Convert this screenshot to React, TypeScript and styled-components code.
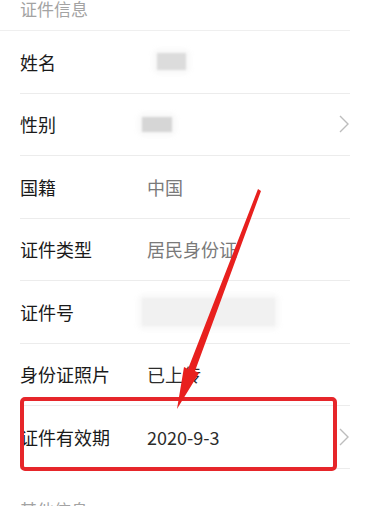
import styled, { createGlobalStyle } from "styled-components";

const GlobalStyle = createGlobalStyle`
  html, body {
    margin: 0;
    padding: 0;
    background: #ffffff;
    overflow: hidden;
  }
  body {
    font-family: "Noto Sans CJK SC", "Noto Sans", sans-serif;
  }
`;

const Page = styled.div`
  position: relative;
  width: 368px;
  height: 506px;
  overflow: hidden;
  background: #ffffff;
`;

const SectionTitle = styled.div<{ $gap?: number }>`
  height: 31px;
  margin-top: ${(p) => p.$gap ?? 0}px;
  padding-left: 20px;
  font-size: 17px;
  line-height: 17px;
  color: #a3a3a3;
  border-bottom: 1px solid #efefef;
  margin-right: 18px;
  box-sizing: border-box;
`;

const Row = styled.div`
  display: flex;
  align-items: center;
  height: 62.5px;
  box-sizing: border-box;
  margin: 0 18px 0 20px;
  border-bottom: 1px solid #ececec;
`;

const Label = styled.div`
  width: 127px;
  flex-shrink: 0;
  font-size: 18px;
  color: #1a1a1a;
`;

const Value = styled.div<{ $dark?: boolean }>`
  flex: 1;
  font-size: 18px;
  color: ${(p) => (p.$dark ? "#2c2c2c" : "#7a7a7a")};
`;

const Blur = styled.div<{ $w: number; $h: number; $shift: number; $tone: string }>`
  width: ${(p) => p.$w}px;
  height: ${(p) => p.$h}px;
  margin-left: ${(p) => p.$shift}px;
  background: ${(p) => p.$tone};
  box-shadow: 0 0 6px 3px #f6f6f6;
  filter: blur(0.8px);
`;

const Chevron = styled.svg`
  width: 12px;
  height: 18px;
  flex-shrink: 0;
`;

const Highlight = styled.div`
  position: absolute;
  left: 20px;
  top: 397px;
  width: 317px;
  height: 74px;
  box-sizing: border-box;
  border: 4px solid #e6262a;
  border-radius: 5px;
  pointer-events: none;
`;

const Arrow = styled.svg`
  position: absolute;
  left: 0;
  top: 0;
  width: 368px;
  height: 506px;
  pointer-events: none;
`;

function Arrowhead() {
  return (
    <Chevron viewBox="0 0 12 18">
      <polyline points="2,1 10,9 2,17" fill="none" stroke="#bdbdbd" strokeWidth="1.4" />
    </Chevron>
  );
}

export default function App() {
  return (
    <Page>
      <GlobalStyle />
      <SectionTitle>证件信息</SectionTitle>
      <Row>
        <Label>姓名</Label>
        <Value>
          <Blur $w={29} $h={17} $shift={10} $tone="#dcdcdc" />
        </Value>
      </Row>
      <Row>
        <Label>性别</Label>
        <Value>
          <Blur $w={30} $h={15} $shift={-5} $tone="#d6d6d6" />
        </Value>
        <Arrowhead />
      </Row>
      <Row>
        <Label>国籍</Label>
        <Value>中国</Value>
      </Row>
      <Row>
        <Label>证件类型</Label>
        <Value>居民身份证</Value>
      </Row>
      <Row>
        <Label>证件号</Label>
        <Value>
          <Blur $w={133} $h={28} $shift={-5} $tone="#f1f1f1" />
        </Value>
      </Row>
      <Row>
        <Label>身份证照片</Label>
        <Value $dark>已上传</Value>
      </Row>
      <Row>
        <Label>证件有效期</Label>
        <Value $dark>2020-9-3</Value>
        <Arrowhead />
      </Row>
      <SectionTitle $gap={32}>其他信息</SectionTitle>
      <Highlight />
      <Arrow viewBox="0 0 368 506">
        <polygon
          points="258,189 261,191 195,371 199,373 177,409 184,367 188,369"
          fill="#e8201e"
        />
      </Arrow>
    </Page>
  );
}
